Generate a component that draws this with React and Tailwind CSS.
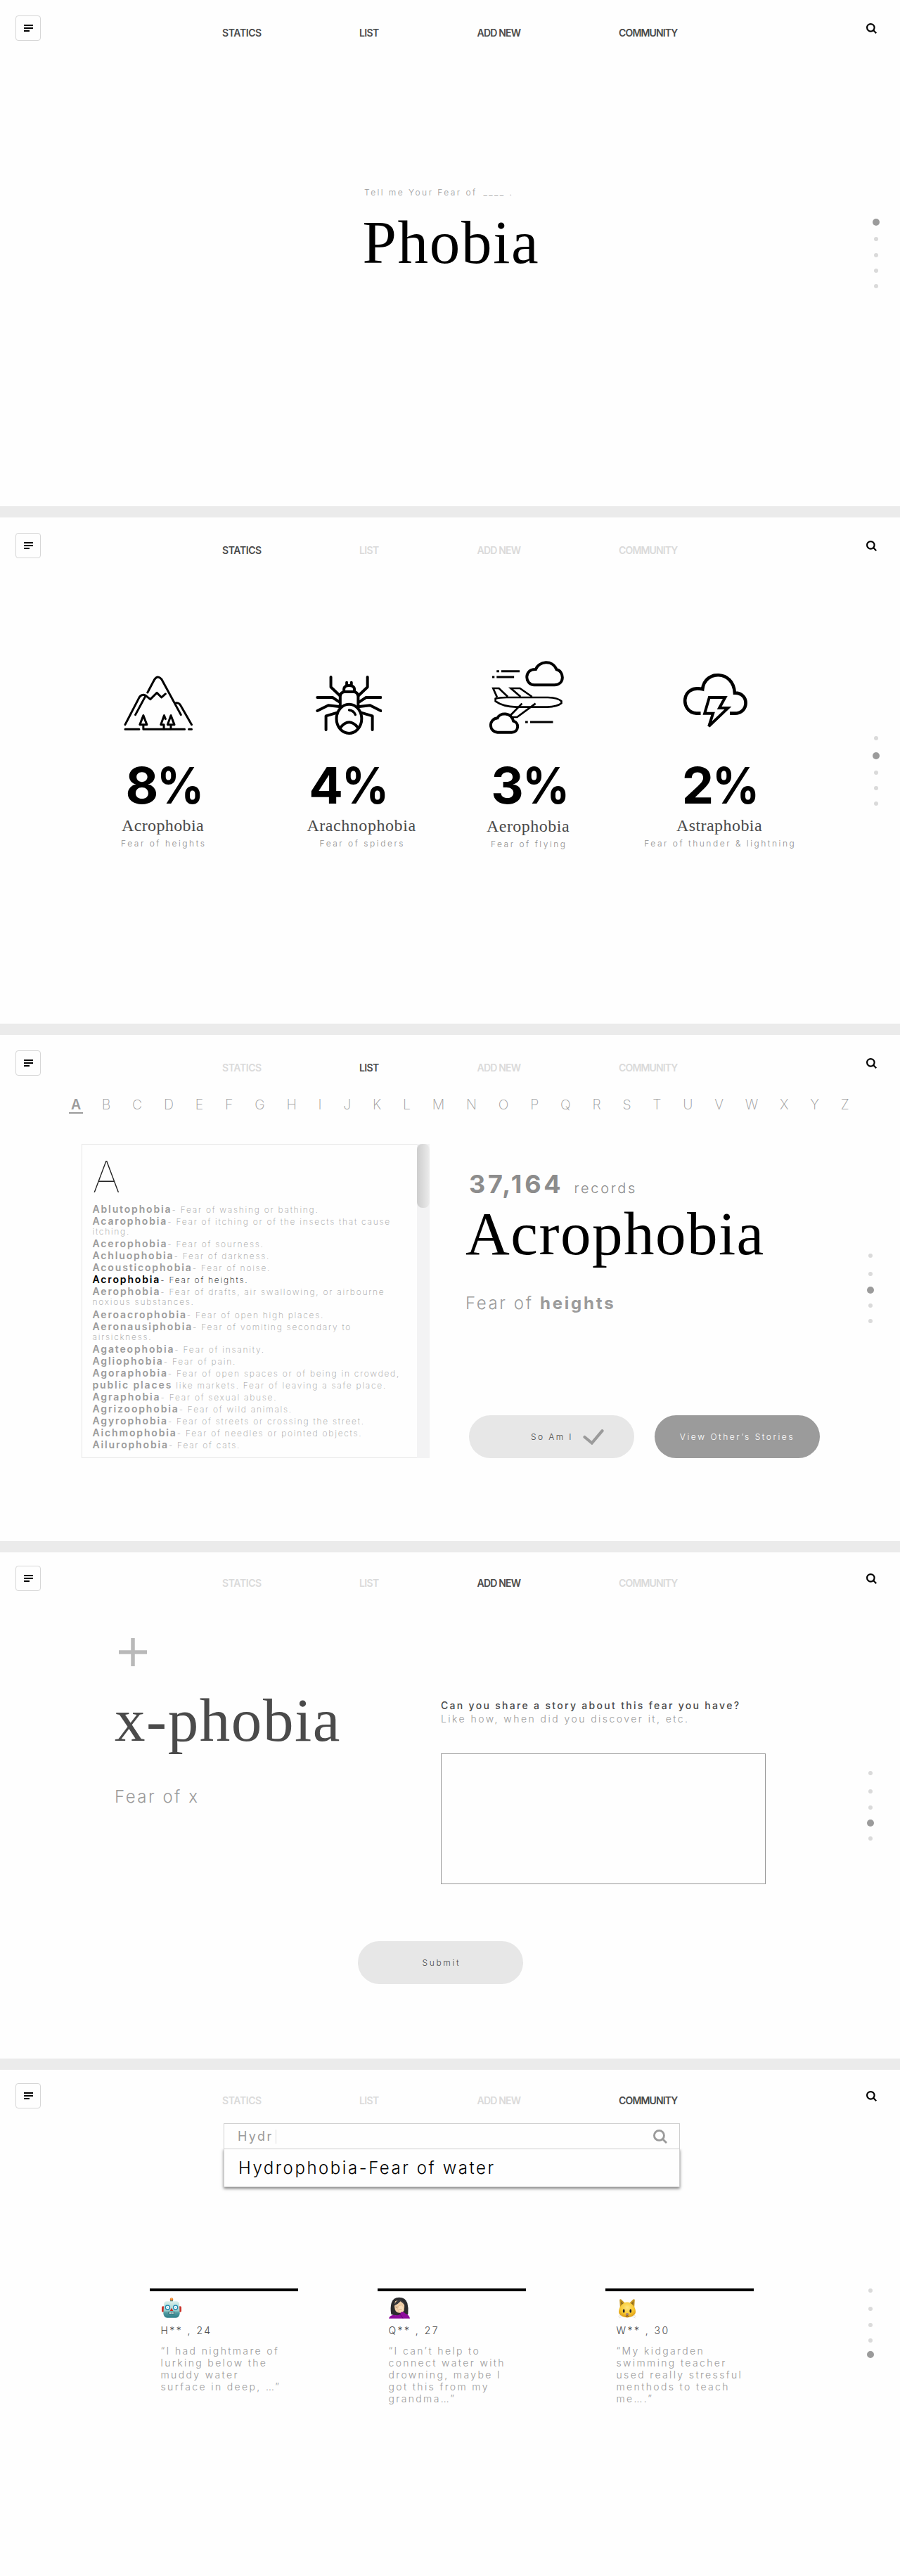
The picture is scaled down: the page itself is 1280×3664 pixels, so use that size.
const NAV = [
  { label: "STATICS", cls: "w-[195px] tracking-[-0.4px]" },
  { label: "LIST", cls: "w-[167.5px] tracking-[-0.65px]" },
  { label: "ADD NEW", cls: "w-[201.5px] tracking-[-0.8px]" },
  { label: "COMMUNITY", cls: "tracking-[-0.85px]" },
];

function SearchIcon({ className, strokeWidth }) {
  return (
    <svg viewBox="0 0 14 14" className={className} fill="none" stroke="currentColor" strokeWidth={strokeWidth}>
      <circle cx="5.9" cy="5.9" r="4.9" />
      <path d="M9.2 9.2 L13.3 13.3" />
    </svg>
  );
}

function Header({ active, raised }) {
  return (
    <header className={raised ? "-mt-[3px] mb-[3px] flex h-[60px] items-start" : "flex h-[60px] items-start"}>
      <button className="mt-[22px] ml-[22px] flex h-9 w-9 flex-col justify-center gap-0.5 rounded border border-[#d6d6d6] pl-[11px]">
        <span className="h-0.5 w-[13px] bg-black" />
        <span className="h-0.5 w-[13px] bg-black" />
        <span className="h-0.5 w-2 bg-black" />
      </button>
      <nav className="mt-[37px] ml-[258px] flex text-sm leading-5 font-semibold">
        {NAV.map((n) => (
          <a key={n.label} className={`${n.cls} whitespace-nowrap ${!active || active === n.label ? "text-[#4a4a4a]" : "text-[#dadada]"}`}>
            {n.label}
          </a>
        ))}
      </nav>
      <SearchIcon className="mt-[33px] mr-[33.5px] ml-auto h-[15px] w-[15px] text-black" strokeWidth="2" />
    </header>
  );
}

const DOT_SPACING = [
  ["mt-[251px]", "mt-3.5", "mt-[13px]", "mt-3", "mt-3"],
  ["mt-[249px]", "mt-[15px]", "mt-3.5", "mt-3", "mt-3"],
  ["mt-[249px]", "mt-4", "mt-[13px]", "mt-3", "mt-3"],
  ["mt-[249px]", "mt-4", "mt-[13px]", "mt-3", "mt-3"],
  ["mt-[249px]", "mt-4", "mt-[13px]", "mt-3", "mt-2.5"],
];

function Dots({ index }) {
  return (
    <div className={index < 2 ? "ml-[21px] w-2.5" : "ml-[13px] w-2.5"}>
      {DOT_SPACING[index].map((m, i) => (
        <div key={i} className={`${m} flex h-2.5 items-center justify-center`}>
          <span className={i === index ? "h-2.5 w-2.5 rounded-full bg-[#9b9b9b]" : "h-1.5 w-1.5 rounded-full bg-[#dadada]"} />
        </div>
      ))}
    </div>
  );
}

function Screen({ index, active, raised, children }) {
  return (
    <section className="h-[720px] overflow-hidden bg-[#fefefe]">
      <Header active={active} raised={raised} />
      <div className="flex">
        <main className="w-[1220px] shrink-0">{children}</main>
        <Dots index={index} />
      </div>
    </section>
  );
}

function Mountain() {
  return (
    <svg viewBox="110 120 296 238" preserveAspectRatio="none" className="mr-3 mb-[5.7px] h-[79.3px] w-[98.2px]" fill="none" stroke="#000" strokeWidth="9" strokeLinecap="round" strokeLinejoin="round">
      <path d="M116 332 L177 215 Q184 205 195 205 Q202 206 208 211 L224 224 L252 196 L272 216 L289 201" />
      <path d="M204 209 L160 290" />
      <path d="M212 195 L242 139 Q256 119 272 138 L355 290" />
      <path d="M332 240 Q346 237 353 249 L401 332" />
      <path d="M116 352 H176 M194 334 V352 H371 M389 352 H401" />
      <path d="M194 293 L179 332 H209 Z" />
      <path d="M289 308 L283 293 L269 332 H282 V350" />
      <path d="M312 293 L298 332 H327 Z M312 332 V350" />
    </svg>
  );
}

function Spider() {
  return (
    <svg viewBox="925 120 286 256" preserveAspectRatio="none" className="mr-9 h-[85.3px] w-[94.9px]" fill="none" stroke="#000" strokeWidth="12" strokeLinecap="round" strokeLinejoin="round">
      <ellipse cx="1068" cy="307" rx="54" ry="62" />
      <path d="M1068 270 Q1088 272 1095 290" strokeWidth="10" />
      <path d="M1030 346 Q1068 298 1107 346" />
      <path d="M1030 262 V212 Q1032 193 1048 192 H1090 Q1105 194 1107 212 V262" />
      <path d="M1046 191 V180 Q1048 165 1068 165 Q1089 165 1091 180 V191" />
      <path d="M1058 164 V152 M1078 164 V152" />
      <path d="M990 129 V172 L1028 208 M1147 129 V172 L1109 208" />
      <path d="M932 216 H997 L1026 235 M1204 216 H1141 L1112 235" />
      <path d="M932 273 L979 250 L1026 255 M1204 273 L1158 250 L1112 255" />
      <path d="M969 354 V295 L1017 281 M1168 354 V295 L1120 281" />
    </svg>
  );
}

function Plane() {
  return (
    <svg viewBox="107 58 320 316" preserveAspectRatio="none" className="mr-[3px] mb-[0.3px] h-[105.3px] w-[106.1px]" fill="none" stroke="#000">
      <path strokeWidth="12" d="M306 97 C318 62 378 54 395 98 C429 105 431 164 386 164 H300 C256 162 256 94 306 97 Z" />
      <g strokeWidth="9">
        <path d="M138 105 H149 M158 105 H237 M119 130 H129 M138 130 H213 M261 322 H272 M282 322 H380" />
        <path strokeWidth="8" d="M133 222 Q150 217 180 217 H358 Q402 219 416 233 V242 Q398 257 355 258 H222 Q165 256 133 233 Z" />
        <path strokeWidth="8" d="M140 216 L123 178 H148 L186 214 M241 214 L199 178 H238 L290 214" />
        <path strokeWidth="8" d="M247 243 L198 293 M305 243 L226 301 H200" />
      </g>
      <path strokeWidth="12" fill="#fefefe" d="M142 305 C152 280 200 280 210 318 C237 325 233 366 203 366 H142 C104 364 102 309 142 305 Z" />
    </svg>
  );
}

function Thunder() {
  return (
    <svg viewBox="933 112 278 254" preserveAspectRatio="none" className="mr-[11px] mb-[3.3px] h-[84.7px] w-[92.2px]" fill="none" stroke="#000" strokeWidth="14">
      <path d="M1010 285 H992 C920 280 925 160 1018 182 C1026 100 1150 98 1156 198 C1218 196 1220 285 1155 285 H1135" />
      <path strokeWidth="12" d="M1047 217 H1115 L1090 262 H1127 L1045 340 L1063 285 H1027 Z" />
    </svg>
  );
}

const STATS = [
  { icon: Mountain, num: "8", name: "Acrophobia", fear: "Fear of heights", col: "ml-[111.5px] w-60", pctCls: "", nameCls: "tracking-[0.37px]" },
  { icon: Spider, num: "4", name: "Arachnophobia", fear: "Fear of spiders", col: "ml-[42.5px] w-60", pctCls: "mr-[42px]", nameCls: "tracking-[0.56px]" },
  { icon: Plane, num: "3", name: "Aerophobia", fear: "Fear of flying", col: "-ml-[3px] w-60", pctCls: "", nameCls: "tracking-[0.48px] mt-px" },
  { icon: Thunder, num: "2", name: "Astraphobia", fear: "Fear of thunder & lightning", col: "ml-8 w-60", pctCls: "mr-0.5", nameCls: "tracking-[0.43px]" },
];

const PHOBIAS = [
  ["Ablutophobia", "- Fear of washing or bathing."],
  ["Acarophobia", "- Fear of itching or of the insects that cause", "itching."],
  ["Acerophobia", "- Fear of sourness."],
  ["Achluophobia", "- Fear of darkness."],
  ["Acousticophobia", "- Fear of noise."],
  ["Acrophobia", "- Fear of heights."],
  ["Aerophobia", "- Fear of drafts, air swallowing, or airbourne", "noxious substances."],
  ["Aeroacrophobia", "- Fear of open high places."],
  ["Aeronausiphobia", "- Fear of vomiting secondary to", "airsickness."],
  ["Agateophobia", "- Fear of insanity."],
  ["Agliophobia", "- Fear of pain."],
  ["Agoraphobia", "- Fear of open spaces or of being in crowded,"],
  ["public places", " like markets. Fear of leaving a safe place."],
  ["Agraphobia", "- Fear of sexual abuse."],
  ["Agrizoophobia", "- Fear of wild animals."],
  ["Agyrophobia", "- Fear of streets or crossing the street."],
  ["Aichmophobia", "- Fear of needles or pointed objects."],
  ["Ailurophobia", "- Fear of cats."],
];

function Robot() {
  return (
    <svg viewBox="84 141 90 93" className="h-[31px] w-[30px]">
      <defs>
        <linearGradient id="robotFace" x1="0" y1="0" x2="0" y2="1">
          <stop offset="0" stopColor="#d9f0ec" />
          <stop offset="0.55" stopColor="#9fd0cf" />
          <stop offset="0.7" stopColor="#4f9ba1" />
          <stop offset="1" stopColor="#2e7d88" />
        </linearGradient>
      </defs>
      <rect x="87" y="181" width="12" height="25" rx="5" fill="#c8342b" />
      <rect x="159" y="181" width="12" height="25" rx="5" fill="#c8342b" />
      <rect x="123" y="152" width="12" height="12" rx="3" fill="#3c8f95" />
      <circle cx="129" cy="151" r="6.5" fill="#e8752a" />
      <circle cx="129" cy="149" r="3" fill="#f6bd4b" />
      <path d="M97 170 Q98 161 108 160 H150 Q160 161 162 170 L164 212 Q162 229 148 230 H110 Q96 229 94 212 Z" fill="url(#robotFace)" />
      <circle cx="112" cy="186" r="9" fill="#fff" stroke="#1d8bb0" strokeWidth="4" />
      <circle cx="146" cy="186" r="9" fill="#fff" stroke="#1d8bb0" strokeWidth="4" />
      <circle cx="112" cy="186" r="2.5" fill="#6fc0d8" />
      <circle cx="146" cy="186" r="2.5" fill="#6fc0d8" />
      <path d="M129 188 L136 201 H122 Z" fill="#d0271f" />
      <rect x="114" y="205" width="30" height="10" rx="4" fill="#2b6a72" />
      <path d="M117 210 H141" stroke="#e8f0ee" strokeWidth="6" strokeDasharray="4 2.6" />
    </svg>
  );
}

function Facepalm() {
  return (
    <svg viewBox="1056 142 90 92" className="h-[31px] w-[30px]">
      <path d="M1066 216 Q1061 190 1067 168 Q1074 144 1100 144 Q1127 144 1135 168 Q1141 190 1138 216 Q1120 224 1100 222 Q1080 224 1066 216 Z" fill="#2b2b2d" />
      <path d="M1083 160 Q1104 150 1120 166 Q1127 190 1116 204 Q1100 216 1086 203 Q1076 186 1083 160 Z" fill="#f0cfa8" />
      <path d="M1078 180 Q1081 160 1104 151 Q1120 158 1125 178 Q1117 168 1106 160 Q1096 172 1078 180 Z" fill="#3b3a3d" />
      <path d="M1085 184 Q1089 187 1093 184" fill="none" stroke="#5c4030" strokeWidth="2" />
      <path d="M1097 180 L1112 176 Q1122 184 1120 200 L1112 211 L1100 207 L1094 192 Z" fill="#f7ddbb" stroke="#d4a77c" strokeWidth="1.5" />
      <path d="M1100 196 Q1106 192 1112 197" fill="none" stroke="#c08f66" strokeWidth="2" />
      <path d="M1056 234 Q1059 221 1078 218 Q1090 224 1104 216 L1108 206 Q1120 203 1126 212 Q1144 219 1146 234 Z" fill="#8e0c9c" />
      <path d="M1104 216 Q1110 224 1116 233" fill="none" stroke="#5f0570" strokeWidth="3" />
    </svg>
  );
}

function Cat() {
  return (
    <svg viewBox="0 0 26 30" className="ml-[2px] h-[30px] w-[26px]">
      <defs>
        <radialGradient id="catFace" cx="0.5" cy="0.35" r="0.65">
          <stop offset="0" stopColor="#ffe680" />
          <stop offset="0.6" stopColor="#f8c932" />
          <stop offset="1" stopColor="#dd9a12" />
        </radialGradient>
      </defs>
      <path d="M2.2 3 Q3 1.6 4.4 2.6 L11 9 L3 16 Z M23.8 3 Q23 1.6 21.6 2.6 L15 9 L23 16 Z" fill="#c6951f" />
      <path d="M4 5 L9 10 L5 13 Z M22 5 L17 10 L21 13 Z" fill="#8c6a22" />
      <path d="M13 6.5 C19 6.5 25 13 25 20 C25 25 20 27.5 13 28.5 C6 27.5 1 25 1 20 C1 13 7 6.5 13 6.5 Z" fill="url(#catFace)" />
      <ellipse cx="8.2" cy="19" rx="1.4" ry="2.8" fill="#22232b" />
      <ellipse cx="17.8" cy="19" rx="1.4" ry="2.8" fill="#22232b" />
      <ellipse cx="13" cy="23.8" rx="2.2" ry="1.7" fill="#a48078" />
      <path d="M11 26.6 Q13 25 15 26.6" fill="none" stroke="#7a4a1a" strokeWidth="1.2" />
      <path d="M6 26.5 L1.5 29 M5 25 L0.5 26.5 M20 26.5 L24.5 29 M21 25 L25.5 26.5" stroke="#d9d3c4" strokeWidth="0.7" />
    </svg>
  );
}

const STORIES = [
  { icon: Robot, who: "H** , 24", lines: ["“I had nightmare of", "lurking below the", "muddy water", "surface in deep, …”"] },
  { icon: Facepalm, who: "Q** , 27", lines: ["“I can’t help to", "connect water with", "drowning, maybe I", "got this from my", "grandma…”"] },
  { icon: Cat, who: "W** , 30", lines: ["“My kidgarden", "swimming teacher", "used really stressful", "menthods to teach", "me….”"] },
];

const SERIF = "font-['Liberation_Serif',serif]";

export default function App() {
  return (
    <div className="flex w-[1280px] flex-col gap-4 bg-[#ebebeb] font-['Inter',sans-serif] whitespace-nowrap">
      <Screen index={0}>
        <p className="mt-[204px] ml-[518px] text-xs leading-5 font-light tracking-[2.45px] text-[#9b9b9b]">
          Tell me Your Fear of <span className="ml-[3px]">____</span> .
        </p>
        <h1 className={`${SERIF} mt-[11px] ml-[515.5px] text-[87px] leading-[100px] tracking-[1.7px] text-black`}>Phobia</h1>
      </Screen>

      <Screen index={1} active="STATICS">
        <div className="mt-36 flex">
          {STATS.map((s) => (
            <div key={s.name} className={`${s.col} flex shrink-0 flex-col items-center`}>
              <div className="flex h-[105px] items-end">
                <s.icon />
              </div>
              <div className={`${s.pctCls} mt-9 text-[72px] leading-[72px] font-bold tracking-[-2px] text-black`}>
                {s.num}
                <span className="inline-block w-[61px] origin-left scale-x-[0.92]">%</span>
              </div>
              <div className={`${SERIF} ${s.nameCls} pt-[7px] text-2xl leading-7 text-[#4a4a4a]`}>{s.name}</div>
              <div className="mt-[3.5px] pl-[2.5px] text-xs leading-4 font-light tracking-[2.53px] text-[#8f8f8f]">{s.fear}</div>
            </div>
          ))}
        </div>
      </Screen>

      <Screen index={2} active="LIST">
        <div className="mt-6 ml-[98px] flex h-[30px] w-[1110px] justify-between text-[19.5px] leading-[30px] font-extralight text-[#9b9b9b]">
          {"ABCDEFGHIJKLMNOPQRSTUVWXYZ".split("").map((l) => (
            <span key={l} className={l === "A" ? "-mr-1 h-7 w-5 border-b-2 border-[#9b9b9b] text-center font-semibold" : ""}>
              {l}
            </span>
          ))}
        </div>
        <div className="mt-[41px] ml-[116px] flex">
          <div className="flex h-[447px] w-[495px] justify-between border border-[#e6e6e6]">
            <div className="pt-4 pl-[14.5px]">
              <div className="text-[62px] leading-[60px] font-thin text-[#222]">A</div>
              <div className="mt-[7px]">
                {PHOBIAS.map(([name, desc, more]) => {
                  const on = name === "Acrophobia";
                  return (
                    <div key={name} className={on ? "text-black" : "text-[#9b9b9b]"}>
                      <div className="h-[17px] text-xs leading-[17px] font-extralight tracking-[1.74px] whitespace-pre">
                        <span className="text-sm leading-[17px] font-semibold tracking-[1.85px]">{name}</span>
                        {desc}
                      </div>
                      {more && <div className="h-[15.3px] text-xs leading-[14px] font-extralight tracking-[1.74px]">{more}</div>}
                    </div>
                  );
                })}
              </div>
            </div>
            <div className="-my-px -mr-px w-[18px] bg-[#f3f3f4]">
              <div className="h-[91px] rounded-lg bg-linear-to-r from-[#cdcdcd] to-[#ececec]" />
            </div>
          </div>

          <div className="ml-[51px]">
            <div className="mt-[37px] flex h-10 items-baseline pl-[5px] text-[#8c8c8c]">
              <span className="text-4xl leading-10 font-bold tracking-[3.8px]">37,164</span>
              <span className="ml-[15px] text-xl leading-10 font-[350] tracking-[2.7px]">records</span>
            </div>
            <h2 className={`${SERIF} mt-px text-[87px] leading-[100px] tracking-[1.5px] text-black`}>Acrophobia</h2>
            <p className="mt-[34px] text-2xl leading-[30px] font-light tracking-[2.6px] text-[#9b9b9b]">
              Fear of <b className="font-bold tracking-[2.8px]">heights</b>
            </p>
            <div className="mt-36 flex gap-[29px] pl-[5px] text-xs font-[350]">
              <button className="flex h-[61px] w-[235px] items-center rounded-full bg-[#e7e7e7] pl-[88px] tracking-[2.38px] text-[#4a4a4a]">
                So Am I
                <svg viewBox="0 0 30 22" className="ml-3.5 h-[22px] w-[30px]" fill="none" stroke="#9b9b9b" strokeWidth="4.2" strokeLinecap="round">
                  <path d="M2.5 11 L12.8 19.5 L27.5 2.2" />
                </svg>
              </button>
              <button className="h-[61px] w-[235px] rounded-full bg-[#9b9b9b] tracking-[2.56px] text-white">View Other’s Stories</button>
            </div>
          </div>
        </div>
      </Screen>

      <Screen index={3} active="ADD NEW" raised>
        <div className="flex h-[493px] pl-[163px]">
          <div className="w-[464px]">
            <svg viewBox="0 0 40 40" className="mt-[61.5px] ml-1.5 h-10 w-10" stroke="#b9b9b9" strokeWidth="5.5">
              <path d="M0 20 H40 M20 0 V40" />
            </svg>
            <h2 className={`${SERIF} mt-[27.5px] text-[87px] leading-[100px] tracking-[1.6px] text-[#4a4a4a]`}>x-phobia</h2>
            <p className="mt-11 text-2xl leading-[30px] font-[350] tracking-[2.5px] text-[#9b9b9b]">Fear of x</p>
          </div>
          <div className="pt-[148px] text-sm leading-[19px] text-[#9b9b9b]">
            <p className="font-medium tracking-[2.31px] text-[#4a4a4a]">Can you share a story about this fear you have?</p>
            <p className="font-[350] tracking-[2.45px]">Like how, when did you discover it, etc.</p>
            <textarea className="mt-10 block h-[186px] w-[462px] resize-none border border-[#979797]" />
          </div>
        </div>
        <button className="ml-[509px] h-[61px] w-[235px] rounded-full bg-[#e7e7e7] pl-[2.6px] text-xs font-[350] tracking-[2.65px] text-[#4a4a4a]">Submit</button>
      </Screen>

      <Screen index={4} active="COMMUNITY" raised>
        <div className="mt-4 ml-[318px] w-[649px]">
          <div className="flex h-[37px] items-center border border-[#cfcfcf] pr-[17px] pl-[19px] text-lg font-normal text-[#9b9b9b]">
            <span className="tracking-[2.4px]">Hydr</span>
            <span className="ml-[3px] h-5 w-px bg-[#dcdcdc]" />
            <SearchIcon className="ml-auto h-5 w-5 text-[#9b9b9b]" strokeWidth="2" />
          </div>
          <div className="-mt-px flex h-[55px] items-center border border-[#cfcfcf] bg-[#fefefe] pl-5 text-2xl font-[350] tracking-[2.55px] text-black shadow-[0_2px_4px_rgba(0,0,0,0.5)] [clip-path:inset(0_-8px_-8px_-8px)]">
            Hydrophobia-Fear of water
          </div>
        </div>
        <div className="mt-36 ml-[213px] flex gap-[113px]">
          {STORIES.map((s) => (
            <article key={s.who} className="w-[211px] border-t-4 border-black pl-[15.5px] text-sm">
              <div className="mt-2 flex h-[31px] items-end">
                <s.icon />
              </div>
              <p className="mt-[7px] leading-5 font-[350] tracking-[2.45px] text-[#4a4a4a]">{s.who}</p>
              <p className="mt-2.5 leading-[17px] font-light tracking-[2.36px] text-[#9b9b9b]">
                {s.lines.map((l) => (
                  <span key={l} className="block">
                    {l}
                  </span>
                ))}
              </p>
            </article>
          ))}
        </div>
      </Screen>
    </div>
  );
}
